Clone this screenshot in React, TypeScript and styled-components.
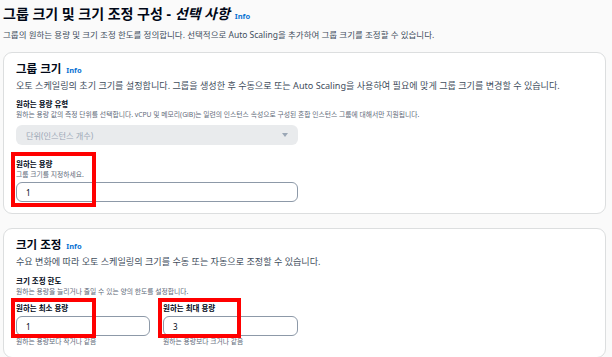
import React from "react";
import styled, { createGlobalStyle } from "styled-components";

const GlobalStyle = createGlobalStyle`
  html, body {
    margin: 0;
    padding: 0;
    background: #fafafa;
  }
  body {
    font-family: "Noto Sans", "Noto Sans CJK KR", sans-serif;
    color: #000716;
    overflow: hidden;
  }
`;

const Page = styled.main`
  padding: 5px 6px 0 3px;
  display: flex;
  flex-direction: column;
  width: 612px;
  box-sizing: border-box;
`;

const Title = styled.h1`
  margin: 0;
  font-size: 14px;
  line-height: 18px;
  font-weight: 700;
  display: flex;
  align-items: baseline;
  gap: 5px;
`;

const Optional = styled.em`
  font-style: italic;
`;

const Info = styled.a`
  font-size: 7.5px;
  font-weight: 700;
  color: #0972d3;
  text-decoration: none;
  font-style: normal;
`;

const PageDesc = styled.p`
  margin: 4px 0 0;
  font-size: 8.5px;
  line-height: 12px;
  color: #414d5c;
`;

const Panel = styled.section<{ $top: number }>`
  margin-top: ${(p) => p.$top}px;
  background: #fff;
  border: 1px solid #dcdedf;
  border-radius: 9px;
  padding: 8px 12px 11px;
  display: flex;
  flex-direction: column;
`;

const PanelTitle = styled.h2`
  margin: 0;
  font-size: 11.5px;
  line-height: 16px;
  font-weight: 700;
  display: flex;
  align-items: baseline;
  gap: 5px;
`;

const PanelDesc = styled.p`
  margin: 2px 0 0;
  font-size: 9.1px;
  line-height: 12px;
  color: #414d5c;
`;

const Field = styled.div<{ $gap: number; $width?: number }>`
  position: relative;
  margin-top: ${(p) => p.$gap}px;
  width: ${(p) => (p.$width ? `${p.$width}px` : "auto")};
  display: flex;
  flex-direction: column;
`;

const Label = styled.label`
  font-size: 7.5px;
  line-height: 11px;
  font-weight: 700;
  color: #000716;
`;

const Hint = styled.span<{ $after?: boolean }>`
  font-size: 6.8px;
  line-height: 9px;
  color: #5f6b7a;
  margin-top: ${(p) => (p.$after ? "1px" : "0")};
`;

const Select = styled.div`
  margin-top: 6px;
  width: 282px;
  height: 20px;
  box-sizing: border-box;
  background: #e9ebed;
  border-radius: 6px;
  padding: 0 10px;
  display: flex;
  align-items: center;
  justify-content: space-between;
  font-size: 8.2px;
  color: #9ba7b6;
`;

const Caret = styled.span`
  width: 0;
  height: 0;
  border-left: 3.5px solid transparent;
  border-right: 3.5px solid transparent;
  border-top: 4px solid #9ba7b6;
`;

const Input = styled.div<{ $width: number; $gap: number }>`
  margin-top: ${(p) => p.$gap}px;
  width: ${(p) => p.$width}px;
  height: 20px;
  box-sizing: border-box;
  border: 1px solid #8d99a8;
  border-radius: 6px;
  padding: 0 9px;
  display: flex;
  align-items: center;
  font-size: 8px;
  color: #000716;
`;

const Row = styled.div`
  display: flex;
  gap: 13px;
`;

const Highlight = styled.div<{ $w: number; $h: number; $top: number }>`
  position: absolute;
  left: -5px;
  top: ${(p) => p.$top}px;
  width: ${(p) => p.$w}px;
  height: ${(p) => p.$h}px;
  box-sizing: border-box;
  border: 4px solid #f00;
  pointer-events: none;
`;

export default function App() {
  return (
    <>
      <GlobalStyle />
      <Page>
        <Title>
          <span>
            그룹 크기 및 크기 조정 구성 - <Optional>선택 사항</Optional>
          </span>
          <Info>Info</Info>
        </Title>
        <PageDesc>
          그룹의 원하는 용량 및 크기 조정 한도를 정의합니다. 선택적으로 Auto Scaling을 추가하여 그룹 크기를 조정할 수 있습니다.
        </PageDesc>

        <Panel $top={11}>
          <PanelTitle>
            그룹 크기 <Info>Info</Info>
          </PanelTitle>
          <PanelDesc>
            오토 스케일링의 초기 크기를 설정합니다. 그룹을 생성한 후 수동으로 또는 Auto Scaling을 사용하여 필요에 맞게 그룹 크기를 변경할 수 있습니다.
          </PanelDesc>
          <Field $gap={7}>
            <Label>원하는 용량 유형</Label>
            <Hint>
              원하는 용량 값의 측정 단위를 선택합니다. vCPU 및 메모리(GiB)는 일련의 인스턴스 속성으로 구성된 혼합 인스턴스 그룹에 대해서만 지원됩니다.
            </Hint>
            <Select>
              <span>단위(인스턴스 개수)</span>
              <Caret />
            </Select>
          </Field>
          <Field $gap={14}>
            <Label>원하는 용량</Label>
            <Hint>그룹 크기를 지정하세요.</Hint>
            <Input $width={282} $gap={3}>1</Input>
            <Highlight $w={85} $h={55} $top={-7} />
          </Field>
        </Panel>

        <Panel $top={14}>
          <PanelTitle>
            크기 조정 <Info>Info</Info>
          </PanelTitle>
          <PanelDesc>수요 변화에 따라 오토 스케일링의 크기를 수동 또는 자동으로 조정할 수 있습니다.</PanelDesc>
          <Field $gap={8}>
            <Label>크기 조정 한도</Label>
            <Hint>원하는 용량을 늘리거나 줄일 수 있는 양의 한도를 설정합니다.</Hint>
          </Field>
          <Row>
            <Field $gap={7} $width={134}>
              <Label>원하는 최소 용량</Label>
              <Input $width={134} $gap={2}>1</Input>
              <Hint $after>원하는 용량보다 작거나 같음</Hint>
              <Highlight $w={85} $h={40} $top={-5} />
            </Field>
            <Field $gap={7} $width={135}>
              <Label>원하는 최대 용량</Label>
              <Input $width={135} $gap={2}>3</Input>
              <Hint $after>원하는 용량보다 크거나 같음</Hint>
              <Highlight $w={83} $h={40} $top={-5} />
            </Field>
          </Row>
        </Panel>
      </Page>
    </>
  );
}
